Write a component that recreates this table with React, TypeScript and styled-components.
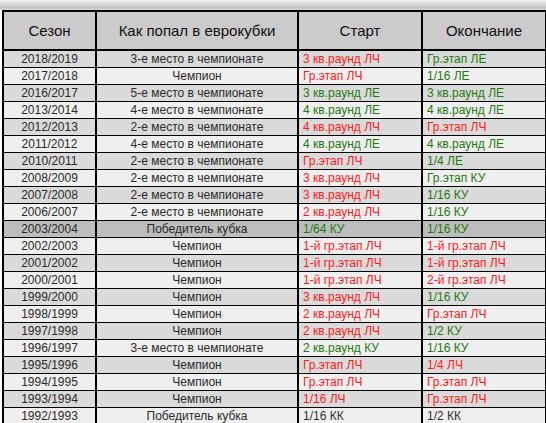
import React from "react";
import styled, { createGlobalStyle } from "styled-components";

// глобальные стили страницы
const GlobalStyle = createGlobalStyle`
  html, body {
    margin: 0;
    padding: 0;
    background: #fff;
  }
  body {
    font-family: "Liberation Sans", Arial, sans-serif;
  }
`;

type Tone = "red" | "green" | "dark";

type Season = {
  season: string;
  how: string;
  start: string;
  end: string;
  startTone: Tone;
  endTone: Tone;
  highlight?: boolean;
};

const seasons: Array<Season> = [
  { season: "2018/2019", how: "3-е место в чемпионате", start: "3 кв.раунд ЛЧ", end: "Гр.этап ЛЕ", startTone: "red", endTone: "green" },
  { season: "2017/2018", how: "Чемпион", start: "Гр.этап ЛЧ", end: "1/16 ЛЕ", startTone: "red", endTone: "green" },
  { season: "2016/2017", how: "5-е место в чемпионате", start: "3 кв.раунд ЛЕ", end: "3 кв.раунд ЛЕ", startTone: "green", endTone: "green" },
  { season: "2013/2014", how: "4-е место в чемпионате", start: "4 кв.раунд ЛЕ", end: "4 кв.раунд ЛЕ", startTone: "green", endTone: "green" },
  { season: "2012/2013", how: "2-е место в чемпионате", start: "4 кв.раунд ЛЧ", end: "Гр.этап ЛЧ", startTone: "red", endTone: "red" },
  { season: "2011/2012", how: "4-е место в чемпионате", start: "4 кв.раунд ЛЕ", end: "4 кв.раунд ЛЕ", startTone: "green", endTone: "green" },
  { season: "2010/2011", how: "2-е место в чемпионате", start: "Гр.этап ЛЧ", end: "1/4 ЛЕ", startTone: "red", endTone: "green" },
  { season: "2008/2009", how: "2-е место в чемпионате", start: "3 кв.раунд ЛЧ", end: "Гр.этап КУ", startTone: "red", endTone: "green" },
  { season: "2007/2008", how: "2-е место в чемпионате", start: "3 кв.раунд ЛЧ", end: "1/16 КУ", startTone: "red", endTone: "green" },
  { season: "2006/2007", how: "2-е место в чемпионате", start: "2 кв.раунд ЛЧ", end: "1/16 КУ", startTone: "red", endTone: "green" },
  { season: "2003/2004", how: "Победитель кубка", start: "1/64 КУ", end: "1/16 КУ", startTone: "green", endTone: "green", highlight: true },
  { season: "2002/2003", how: "Чемпион", start: "1-й гр.этап ЛЧ", end: "1-й гр.этап ЛЧ", startTone: "red", endTone: "red" },
  { season: "2001/2002", how: "Чемпион", start: "1-й гр.этап ЛЧ", end: "1-й гр.этап ЛЧ", startTone: "red", endTone: "red" },
  { season: "2000/2001", how: "Чемпион", start: "1-й гр.этап ЛЧ", end: "2-й гр.этап ЛЧ", startTone: "red", endTone: "red" },
  { season: "1999/2000", how: "Чемпион", start: "3 кв.раунд ЛЧ", end: "1/16 КУ", startTone: "red", endTone: "green" },
  { season: "1998/1999", how: "Чемпион", start: "2 кв.раунд ЛЧ", end: "Гр.этап ЛЧ", startTone: "red", endTone: "red" },
  { season: "1997/1998", how: "Чемпион", start: "2 кв.раунд ЛЧ", end: "1/2 КУ", startTone: "red", endTone: "green" },
  { season: "1996/1997", how: "3-е место в чемпионате", start: "2 кв.раунд КУ", end: "1/16 КУ", startTone: "green", endTone: "green" },
  { season: "1995/1996", how: "Чемпион", start: "Гр.этап ЛЧ", end: "1/4 ЛЧ", startTone: "red", endTone: "red" },
  { season: "1994/1995", how: "Чемпион", start: "Гр.этап ЛЧ", end: "Гр.этап ЛЧ", startTone: "red", endTone: "red" },
  { season: "1993/1994", how: "Чемпион", start: "1/16 ЛЧ", end: "Гр.этап ЛЧ", startTone: "red", endTone: "red" },
  { season: "1992/1993", how: "Победитель кубка", start: "1/16 КК", end: "1/2 КК", startTone: "dark", endTone: "dark" },
];

const toneColor: Record<Tone, string> = {
  red: "#ff1a1a",
  green: "#1f7a12",
  dark: "#333333",
};

// полоса-тень над таблицей
const TopShade = styled.div`
  height: 10px;
  background: linear-gradient(#f2f2f2 0%, #c4c4c4 75%, #d6d6d6 100%);
`;

const Wrap = styled.div`
  padding-left: 2px;
`;

const Table = styled.table`
  width: 543px;
  border-collapse: collapse;
  table-layout: fixed;
  border: 2px solid #000;
`;

const Col = styled.col<{ w: number }>`
  width: ${({ w }) => w}px;
`;

const HeadCell = styled.th`
  height: 37px;
  padding: 0;
  background: #cbcbcb;
  border: 2px solid #000;
  font-weight: normal;
  font-size: 15px;
  color: #111;
  text-align: center;
  vertical-align: middle;
`;

const Row = styled.tr<{ odd: boolean; highlight?: boolean }>`
  background: ${({ odd, highlight }) =>
    highlight ? "#bdbdbd" : odd ? "#efefef" : "#dadada"};
`;

const Cell = styled.td<{ align?: "left" | "center"; tone?: Tone }>`
  height: 16px;
  padding: 0 0 0 ${({ align }) => (align === "left" ? "4px" : "0")};
  border-left: 2px solid #000;
  border-right: 2px solid #000;
  border-top: 1px solid #000;
  border-bottom: 1px solid #000;
  font-size: 12px;
  line-height: 15px;
  white-space: nowrap;
  overflow: hidden;
  text-align: ${({ align }) => align || "center"};
  color: ${({ tone }) => (tone ? toneColor[tone] : "#2a2a2a")};
`;

export default function App() {
  return (
    <>
      <GlobalStyle />
      <TopShade />
      <Wrap>
        <Table>
          <colgroup>
            <Col w={93} />
            <Col w={202} />
            <Col w={124} />
            <Col w={124} />
          </colgroup>
          <thead>
            <tr>
              <HeadCell>Сезон</HeadCell>
              <HeadCell>Как попал в еврокубки</HeadCell>
              <HeadCell>Старт</HeadCell>
              <HeadCell>Окончание</HeadCell>
            </tr>
          </thead>
          <tbody>
            {seasons.map((s, i) => (
              <Row key={s.season} odd={i % 2 === 1} highlight={s.highlight}>
                <Cell>{s.season}</Cell>
                <Cell>{s.how}</Cell>
                <Cell align="left" tone={s.startTone}>
                  {s.start}
                </Cell>
                <Cell align="left" tone={s.endTone}>
                  {s.end}
                </Cell>
              </Row>
            ))}
          </tbody>
        </Table>
      </Wrap>
    </>
  );
}
